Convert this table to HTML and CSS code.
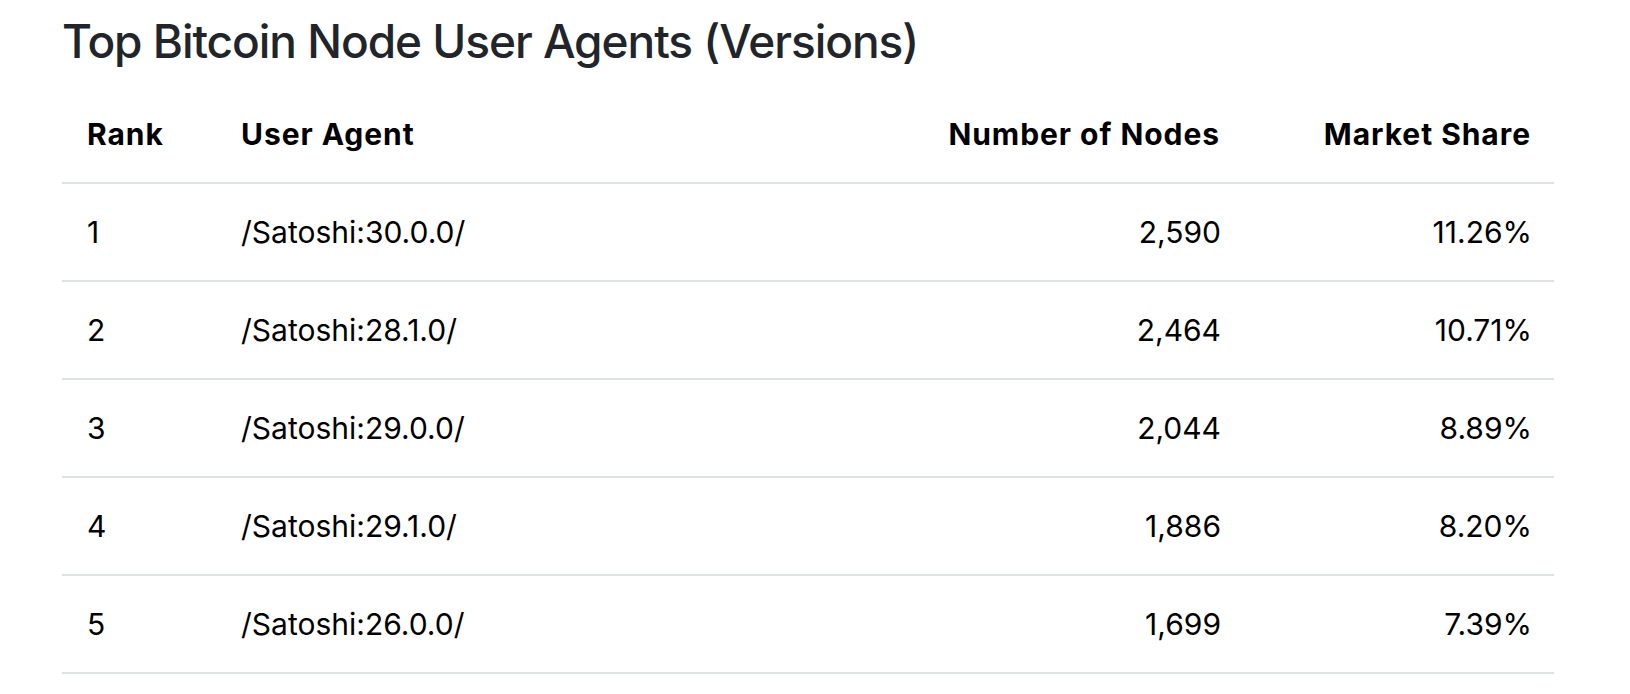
FILE: index.html
```html
<!DOCTYPE html>
<html lang="en">
<head>
<meta charset="utf-8">
<title>Top Bitcoin Node User Agents (Versions)</title>
<link rel="stylesheet" href="styles.css">
</head>
<body>
<main class="page">
  <h2 class="title">Top Bitcoin Node User Agents (Versions)</h2>
  <table class="agents">
    <colgroup>
      <col class="c-rank">
      <col class="c-agent">
      <col class="c-nodes">
      <col class="c-share">
    </colgroup>
    <thead>
      <tr>
        <th class="left">Rank</th>
        <th class="left">User Agent</th>
        <th class="right">Number of Nodes</th>
        <th class="right">Market Share</th>
      </tr>
    </thead>
    <tbody>
      <tr><td class="left">1</td><td class="left">/Satoshi:30.0.0/</td><td class="right">2,590</td><td class="right">11.26%</td></tr>
      <tr><td class="left">2</td><td class="left">/Satoshi:28.1.0/</td><td class="right">2,464</td><td class="right">10.71%</td></tr>
      <tr><td class="left">3</td><td class="left">/Satoshi:29.0.0/</td><td class="right">2,044</td><td class="right">8.89%</td></tr>
      <tr><td class="left">4</td><td class="left">/Satoshi:29.1.0/</td><td class="right">1,886</td><td class="right">8.20%</td></tr>
      <tr><td class="left">5</td><td class="left">/Satoshi:26.0.0/</td><td class="right">1,699</td><td class="right">7.39%</td></tr>
    </tbody>
  </table>
</main>
</body>
</html>
```

FILE: styles.css
```css
html, body {
  margin: 0;
  padding: 0;
  background: #ffffff;
}

body {
  font-family: Inter, "Liberation Sans", Arial, sans-serif;
  color: #000000;
}

.page {
  padding: 14px 0 0 62px;
}

.title {
  margin: 0 0 17px 0;
  font-size: 46px;
  line-height: 1.2;
  font-weight: 500;
  letter-spacing: -1.05px;
  color: #212529;
}

.agents {
  width: 1492px;
  border-collapse: collapse;
  table-layout: fixed;
}

.c-rank { width: 154px; }
.c-agent { width: 600px; }
.c-nodes { width: 427px; }
.c-share { width: 311px; }

.agents th,
.agents td {
  padding: 25px 22px 25px 25px;
  font-size: 30px;
  line-height: 46px;
  border-bottom: 2px solid #dee2e6;
  white-space: nowrap;
}

.agents th {
  font-weight: 700;
  letter-spacing: 0.95px;
}

.agents th.right {
  padding-right: 23px;
}

.agents td {
  font-weight: 400;
}

.left { text-align: left; }
.right { text-align: right; }
```
